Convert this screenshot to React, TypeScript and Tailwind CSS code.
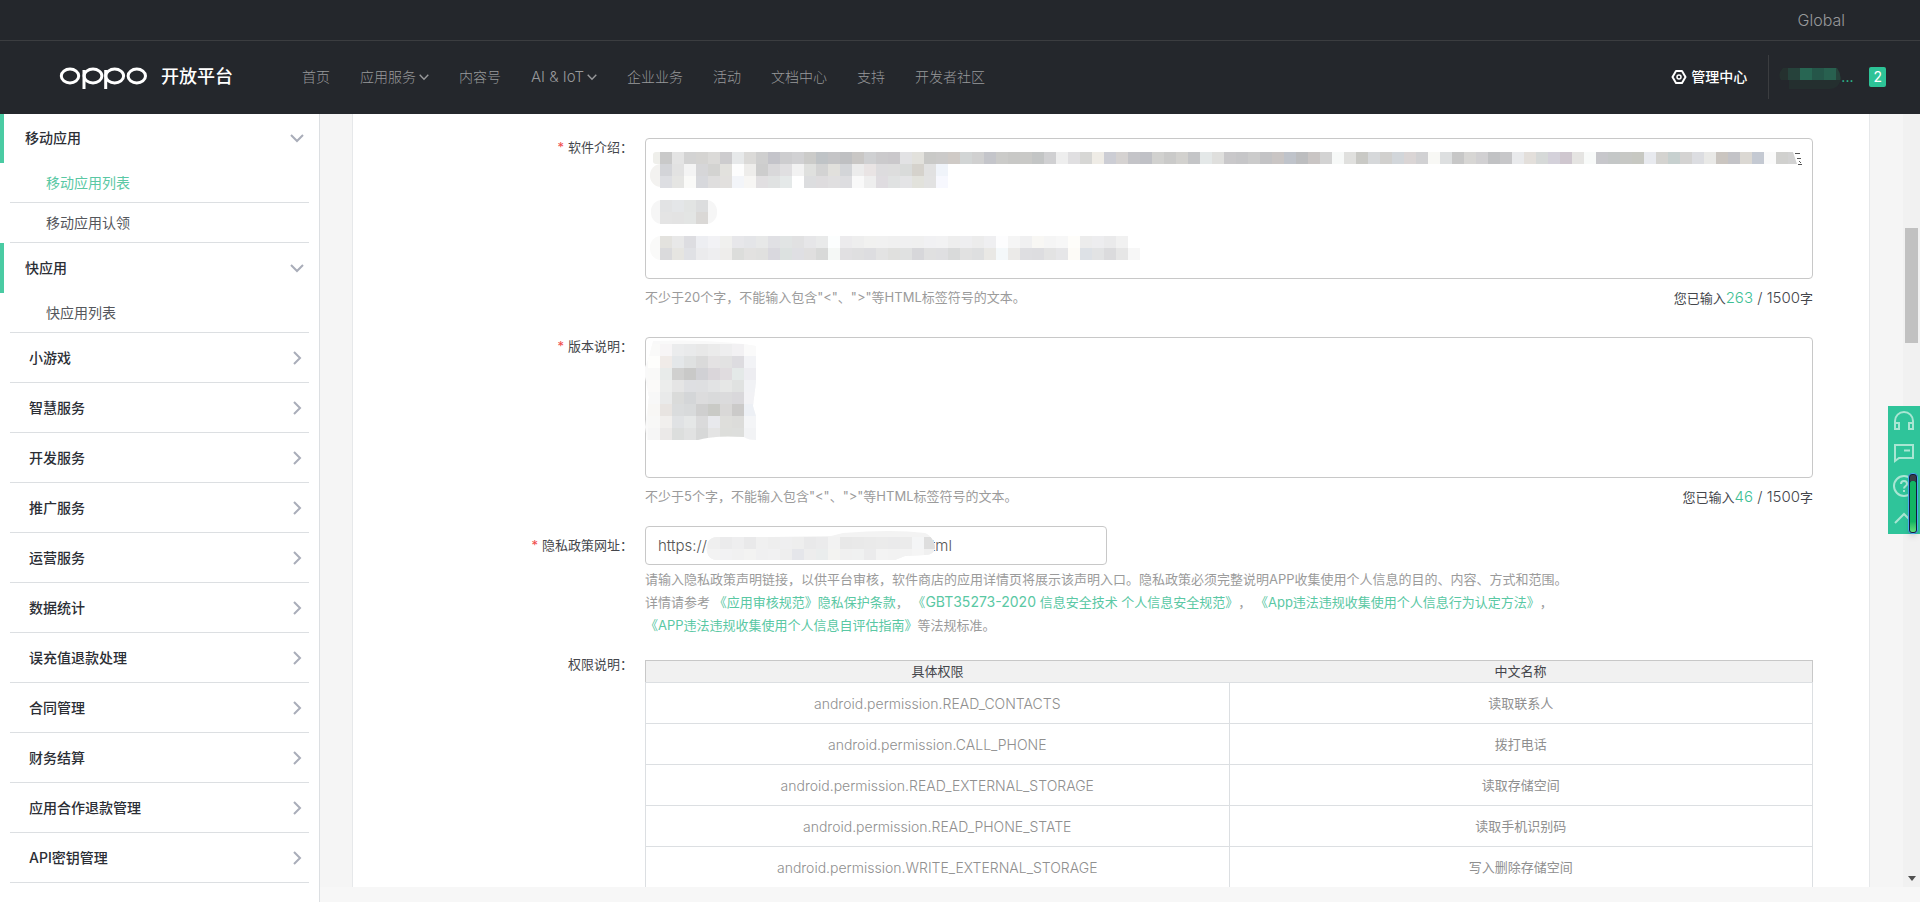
import { ReactNode } from "react";

const navItems = [
  { label: "首页" },
  { label: "应用服务", more: true },
  { label: "内容号" },
  { label: "AI & IoT", more: true },
  { label: "企业业务" },
  { label: "活动" },
  { label: "文档中心" },
  { label: "支持" },
  { label: "开发者社区" },
];

const closedGroups = [
  "小游戏",
  "智慧服务",
  "开发服务",
  "推广服务",
  "运营服务",
  "数据统计",
  "误充值退款处理",
  "合同管理",
  "财务结算",
  "应用合作退款管理",
  "API密钥管理",
];

const permissions = [
  ["android.permission.READ_CONTACTS", "读取联系人"],
  ["android.permission.CALL_PHONE", "拨打电话"],
  ["android.permission.READ_EXTERNAL_STORAGE", "读取存储空间"],
  ["android.permission.READ_PHONE_STATE", "读取手机识别码"],
  ["android.permission.WRITE_EXTERNAL_STORAGE", "写入删除存储空间"],
];

// mosaic colours, one string per row of 12px cells
const introTop = [
  "c9c9c9 e4e4e4 d3d3d3 d5d4d2 dbdad8 cdccce e7e9ea dbdad8 cfcfcf c4c4ca cdcdcf d1d1d3 cbcbc9 bfc3c6 c4c4c6 bfc0c2 c9c7c5 cfd0d2 cbcacc cac8cb e2e2e4 e2e1dc c9c9c7 cbcac9 cfcac6 d2d5d5 d0d0d0 c4c5ca cbcbc9 c8c8c6 c9c9c7 c3c5c5 d0d0d2 eeeeee e0dfe1 d7d7d5 efece6 cccdd4 d5d2d1 c4c4c8 c0c1c6 d1d1cf cacac9 d2d1ce c4c5c7 e4e8e8 dfdfdd c9c8ca c6c6c8 cbcbcb c3c3c5 c9c5c4 bfc3ca bcbdbf c9c5c4 d3d3d3 f7f9f8 e0e0de c9c9c5 d6d8da d1d0ce d2d6da dad5d5 d1d1d3 f8f8f5 dddfe0 c7c7c7 d7d6d4 d1d0d2 c1c2c4 c7c7c9 e9eaec e3dfdb d6d9d8 d4d1da cfc7cf e5e4e2 f8faf9 c7c7cb c4c7c7 c7c8c5 c7c8c2 e8eaef d4d3d0 c7d0cf d4d3d2 dcdde1 e9e9e7 cac5c0 c3c3c7 dbd8d3 c4c9d2 fafafa d0d0ce d2d2d2",
  "d3d4d8 e2e2e2 f4f4f4 d6d6d8 d3d3d1 e2e1dd fdfdfd eeedeb cdcdcd d9d8da e0dfe1 f2f2f2 dfe0de d3d3d3 e1e0dc d3d5d8 ececec e9e4e4 dddcde dddddd d9dbda d5d2cc e1e1e1 f0f4fa",
  "dddee2 e5e5e3 fafaf8 d7d8dc dfdede e2e0de f3f5f9 f7f6f4 e1dfe1 e0e2e2 e5e9e9 ffffff dcdddf dedcde e0dfe0 dddde0 f9f9f9 eeeeee dfdce0 e0e2e2 e4e4e6 e2e2dc e2e2e2 f7f8fe",
];

const introMiddle = ["e2e3e4 e4e6e8 e2e4e3 dcddde", "e4e4e4 e3e3e3 e3e5e4 dad8d6"];

const introBottom = [
  "e3e2de e8e8e8 dddde1 edeef2 f2f2f5 f0f0ee e7e7ea e4e5e8 e7e8e8 e0e0e4 e1e4e4 e1e1e2 e6e6e8 e9eaea fcfefe ecebed eeeeee f1f1f0 f1f1f1 f0f0f0 f0f0f1 f0f0f0 f1f1f3 f2f2f3 eeeeee eeeef0 ececec efeff1 fdfdfe f5f5f5 f0f0f1 f8f7f4 f5f5f5 f7f7f7 fefdfa ececec ededef eaeaeb f1f1f1",
  "dadadc e6e5e1 e0e1e5 ebebed eeeef0 eeedeb dcdddb e2e1e0 e0e0df d9d8de dce1e0 dfdfe3 e0dfdf d8d9d8 f5f8f6 e1e0e2 dfdfe0 dddde0 e3e3e3 e0e0de e0e1e1 d7d7da e0e0e0 dfdfe1 d9dada e1e1e1 dedfe0 e9e8e5 f4f8fa ebeae8 dedee1 dddde0 e3e3e3 e6e6e8 fdfbf7 dde1e6 e2e3e4 dbdbdd e6e6e6 f7f7f7",
];

const versionCells = [
  "fafaf9 f7f5f6 ebeced e9eaeb e8e8e8 ebebeb eeeeef f2f1f3 fafafa",
  "fefefc f0ebe8 e4e7e9 dfe1e1 dadada e4e2e3 e2e2e2 dddce0 f2f3f6",
  "f9f9f8 e8ebea d0d0cf c9c9c8 d1d1d5 dad6da e0dcdf e4e9e8 ededf1",
  "fbfaf9 ecedec e5e5e5 dedfe2 dedfe1 e2e3e4 e6e7e6 e0e2e1 f1f2f5",
  "f8f8f8 e9eaea dadbda d4d6d8 dcdcdd d9dadb dbdbdc d9d8db f2f2f5",
  "f8f7f5 e8e4e1 dadcdd d8dadb cfcfcf c9cac6 d9d8d7 cbcac9 edf0f5",
  "f8f8f7 f1efed e0e2e4 e5e7e7 dadadb e8e9ed dededb dcdcda f4f5f7",
  "f6f6f6 ebe9e8 dcdedd e1e2e2 d7d8d8 e4e4e4 dddedb dddedc f2f3f5",
];

const urlCells = [
  "efefef ebebec eeeeef e9e9ea f0f0f0 eeeeee efeff0 eeeeee e9e9ea ebebec f2f2f2 e8e8e8 e9e9e9 eaeaea ebebeb eaeaeb ebebeb f4f5f6 dedede",
  "f3f3f3 f2f2f3 f1f1f1 f3f3f2 f0f0f1 f1f1f2 eeeeee e5e6ea ededed eaeded f3f3f1 f0f0f0 f0f1f1 ebebec f3f3f3 f2f2f2 f3f3f3 f5f5f5 f0f0f0",
];

const userCells = ["26423b 286653 255649 28604f 26423b", "242f2f 242f2f 242f2f 242f2f 242f2f"];

// the middle of the address lies under the mosaic
const privacyUrl = `https://c${" ".repeat(49)}html`;

function Cells({ rows, x, y }: { rows: string[]; x: number; y: number }) {
  return (
    <g shapeRendering="crispEdges">
      {rows.map((row, r) =>
        row
          .split(" ")
          .map((c, i) => (
            <rect
              key={`${r}-${i}`}
              x={x + i * 12}
              y={y + r * 12}
              width="12"
              height="12"
              fill={`#${c}`}
            />
          ))
      )}
    </g>
  );
}

function Chevron({ className, d }: { className: string; d: string }) {
  return (
    <svg className={className} viewBox="0 0 14 14" fill="none" aria-hidden="true">
      <path d={d} stroke="currentColor" strokeWidth="2" />
    </svg>
  );
}

const DOWN = "M1 4l6 6 6-6";
const RIGHT = "M4 1l6 6-6 6";

function Logo() {
  return (
    <svg width="88" height="28" viewBox="0 0 88 28" fill="none" aria-label="OPPO">
      <g stroke="#fff" strokeWidth="3">
        <ellipse cx="11" cy="13" rx="8.7" ry="6.9" />
        <ellipse cx="34" cy="13" rx="8.9" ry="6.9" />
        <ellipse cx="55.7" cy="13" rx="8.9" ry="6.9" />
        <ellipse cx="77.8" cy="13" rx="8.7" ry="6.9" />
        <path d="M25 7v19M46.700 7v19" />
      </g>
    </svg>
  );
}

function Header() {
  return (
    <header className="shrink-0 bg-[#24272c] text-[#98999b]">
      <div className="flex h-[41px] items-center justify-end border-b border-[#3b3d40] pr-[75px]">
        <a href="#global" className="text-base font-light">
          Global
        </a>
      </div>
      <div className="flex h-[73px] items-center pb-px pl-[59px]">
        <a href="#home" className="flex items-center gap-3.5">
          <Logo />
          <span className="text-lg font-medium text-white">开放平台</span>
        </a>
        <nav className="ml-[69px] flex items-center gap-[30px] text-sm">
          {navItems.map((item) => (
            <a key={item.label} href="#nav" className="flex items-center gap-[3px] font-light">
              <span className={item.label === "AI & IoT" ? "text-[15px]" : ""}>{item.label}</span>
              {item.more && <Chevron className="size-2.5" d={DOWN} />}
            </a>
          ))}
        </nav>
        <div className="ml-auto flex items-center pr-[34px]">
          <a href="#console" className="flex items-center gap-1 text-sm font-medium text-white">
            <svg className="size-4" viewBox="0 0 16 16" fill="none" aria-hidden="true">
              <path
                d="M5 2h6l3.500 6-3.500 6H5L1.500 8z"
                stroke="currentColor"
                strokeWidth="2"
                strokeLinejoin="round"
              />
              <circle cx="8" cy="8" r="2" stroke="currentColor" strokeWidth="1.500" />
            </svg>
            管理中心
          </a>
          <div className="ml-[21px] flex h-11 items-center border-l border-[#3b3d40] pl-2.5">
            <a href="#account" className="flex items-center text-sm text-[#2dc397]">
              <svg width="62" height="24" viewBox="0 0 62 24" aria-hidden="true">
                <clipPath id="user">
                  <path d="M4 3h54q5 7 3 14-3 7-10 7H10V15H2Q-2 9 4 3z" />
                </clipPath>
                <g clipPath="url(#user)">
                  <rect width="62" height="15" fill="#25312f" />
                  <Cells rows={userCells} x={9} y={3} />
                </g>
              </svg>
              ...
            </a>
            <span className="ml-4 rounded-xs bg-[#2dc397] px-1 text-sm text-white">2</span>
          </div>
        </div>
      </div>
    </header>
  );
}

function OpenGroup({ title, items }: { title: string; items: string[] }) {
  return (
    <li>
      <button className="flex h-[50px] w-full items-center justify-between border-l-4 border-[#4acba3] pr-[15px] pl-[21px] font-medium text-[#2b2e35]">
        {title}
        <Chevron className="size-3.5 text-[#a9adb9]" d={DOWN} />
      </button>
      <ul>
        {items.map((item) => (
          <li key={item} className="mx-2.5 border-b border-[#dcdfe2]">
            <a
              href="#list"
              className={
                item === "移动应用列表"
                  ? "flex h-[39px] items-center pl-9 text-[#5ac8a4]"
                  : "flex h-[39px] items-center pl-9 text-[#55575c]"
              }
            >
              {item}
            </a>
          </li>
        ))}
      </ul>
    </li>
  );
}

function Sidebar() {
  return (
    <aside className="w-80 shrink-0 overflow-hidden border-r border-[#dcdfe2] bg-white text-sm">
      <ul className="-mt-px">
        <OpenGroup title="移动应用" items={["移动应用列表", "移动应用认领"]} />
        <OpenGroup title="快应用" items={["快应用列表"]} />
        {closedGroups.map((title) => (
          <li key={title} className="mx-2.5 border-b border-[#dcdfe2]">
            <button className="flex h-[49px] w-full items-center justify-between pr-[5px] pl-[19px] font-medium text-[#2b2e35]">
              {title}
              <Chevron className="size-3.5 text-[#a9adb9]" d={RIGHT} />
            </button>
          </li>
        ))}
      </ul>
    </aside>
  );
}

function Field({
  id,
  label,
  required,
  middle,
  children,
}: {
  id?: string;
  label: string;
  required?: boolean;
  middle?: boolean;
  children: ReactNode;
}) {
  return (
    <div className="flex gap-3">
      <label
        htmlFor={id}
        className={
          middle
            ? "w-[280px] shrink-0 pt-2.5 text-right leading-[18px] text-[#44464b]"
            : "w-[280px] shrink-0 text-right leading-[18px] text-[#44464b]"
        }
      >
        {required && <span className="mr-1 text-[#f04b4b]">*</span>}
        {label}：
      </label>
      <div className="min-w-0 flex-1">{children}</div>
    </div>
  );
}

function Hint({ min, count }: { min: number; count: number }) {
  return (
    <div className="mt-2 flex h-5 justify-between leading-5">
      <p className="text-[#9b9b9b]">
        不少于{min}个字，不能输入包含"&lt;"、"&gt;"等HTML标签符号的文本。
      </p>
      <p className="pt-px text-[#44464b]">
        您已输入<span className="text-[15px] font-light text-[#3fbf95]">{count}</span>
        <span className="text-[15px] font-light"> / 1500</span>字
      </p>
    </div>
  );
}

function Form() {
  return (
    <form className="pt-6 pr-14 text-[13px]">
      <div className="mb-[30px]">
        <Field id="intro" label="软件介绍" required>
          <div className="relative">
            <textarea
              id="intro"
              className="block h-[141px] w-full resize-none rounded border border-[#c8c8c8] px-3 py-2 outline-none"
            />
            <svg
              className="pointer-events-none absolute top-0 left-0"
              width="1168"
              height="140"
              viewBox="0 0 1168 140"
              aria-hidden="true"
            >
              <path d="M1150 15.500h5M1152 20.500h4M1153 26.500h4M1154 23l2 2" stroke="#555" />
              <rect x="8" y="14" width="20" height="12" rx="3" fill="#efefeb" />
              <rect x="5" y="26" width="30" height="23" rx="11" fill="#f3f2f0" />
              <rect x="6" y="62" width="66" height="24" rx="11" fill="#f6f6f6" />
              <rect x="5" y="98" width="30" height="24" rx="11" fill="#fafaf9" />
              <clipPath id="introClip">
                <path d="M0 0h1148v14l4 12v60H0z" />
              </clipPath>
              <g clipPath="url(#introClip)">
                <Cells rows={introTop} x={15} y={14} />
              </g>
              <Cells rows={introMiddle} x={15} y={62} />
              <Cells rows={introBottom} x={15} y={98} />
            </svg>
          </div>
          <Hint min={20} count={263} />
        </Field>
      </div>

      <div className="mb-5">
        <Field id="version" label="版本说明" required>
          <div className="relative">
            <textarea
              id="version"
              className="block h-[141px] w-full resize-none rounded border border-[#c8c8c8] px-3 py-2 outline-none"
            />
            <svg
              className="pointer-events-none absolute top-0 left-0"
              width="112"
              height="104"
              viewBox="0 0 112 104"
              aria-hidden="true"
            >
              <clipPath id="versionClip">
                <path d="M8 4q50-2 90 3l13 2v36l-3 24 3 10v24q-8 0-12-3-30-2-46 3H2L0 90 4 60 0 40V30l4-10z" />
              </clipPath>
              <g clipPath="url(#versionClip)">
                <rect width="112" height="104" fill="#f9f9f9" />
                <Cells rows={versionCells} x={3} y={7} />
              </g>
            </svg>
          </div>
          <Hint min={5} count={46} />
        </Field>
      </div>

      <Field id="privacy" label="隐私政策网址" required middle>
        <div className="relative max-w-[462px]">
          <input
            id="privacy"
            defaultValue={privacyUrl}
            className="block h-[39px] w-full rounded border border-[#c8c8c8] px-3 text-[15px] font-light whitespace-pre text-[#555] outline-none"
          />
          <svg
            className="pointer-events-none absolute top-0 left-0"
            width="300"
            height="39"
            viewBox="0 0 300 39"
            aria-hidden="true"
          >
            <clipPath id="urlClip">
              <path d="M72 11h54l60-1 12-3q50-4 82 0c6 2 10 10 10 14 0 5-4 8-10 8l-20 1-10 4H72c-14 0-14-23 0-23z" />
            </clipPath>
            <g clipPath="url(#urlClip)">
              <rect x="60" width="240" height="39" fill="#f3f3f3" />
              <Cells rows={urlCells} x={63} y={11} />
            </g>
          </svg>
        </div>
        <p className="mt-[3px] leading-[23px] text-[#9b9b9b] [text-spacing-trim:space-all]">
          请输入隐私政策声明链接，以供平台审核，软件商店的应用详情页将展示该声明入口。隐私政策必须完整说明APP收集使用个人信息的目的、内容、方式和范围。
          <br />
          详情请参考{" "}
          <a href="#rule" className="text-[#5ac8a4]">
            《应用审核规范》隐私保护条款
          </a>
          ，{" "}
          <a href="#gbt" className="text-[#5ac8a4]">
            《<span className="text-sm">GBT35273-2020</span> 信息安全技术 个人信息安全规范》
          </a>
          ，{" "}
          <a href="#method" className="text-[#5ac8a4]">
            《App违法违规收集使用个人信息行为认定方法》
          </a>
          ，
          <br />
          <a href="#guide" className="text-[#5ac8a4]">
            《APP违法违规收集使用个人信息自评估指南》
          </a>
          等法规标准。
        </p>
      </Field>

      <div className="mt-[18px]">
        <Field label="权限说明">
          <table className="mt-[5px] w-full table-fixed border-collapse text-center">
            <thead className="bg-[#f1f1f1] text-[#44464b]">
              <tr className="h-[22px] border border-[#c8c8c8] border-b-[#dcdfe2]">
                <th className="font-normal">具体权限</th>
                <th className="font-normal">中文名称</th>
              </tr>
            </thead>
            <tbody className="text-[#8f8f8f]">
              {permissions.map(([name, desc]) => (
                <tr key={name} className="h-[41px]">
                  <td className="border border-[#dcdfe2] pt-0.5 text-sm font-light">{name}</td>
                  <td className="border border-[#dcdfe2] pt-0.5">{desc}</td>
                </tr>
              ))}
            </tbody>
          </table>
        </Field>
      </div>
    </form>
  );
}

function ScrollTrack() {
  return (
    <div className="flex w-[17px] shrink-0 flex-col items-center justify-between bg-[#f1f1f1] pt-[114px] pb-1.5">
      <div className="h-[115px] w-[13px] bg-[#c1c1c1]" />
      <svg width="8" height="5" viewBox="0 0 8 5" aria-hidden="true">
        <path d="M0 0h8L4 5z" fill="#505050" />
      </svg>
    </div>
  );
}

function SideTools() {
  return (
    <div className="fixed top-[406px] right-0 flex h-32 w-8 flex-col items-center justify-between bg-[#2fc49a] py-1 text-[#a9e6d3]">
      <button aria-label="客服">
        <svg width="22" height="22" viewBox="0 0 22 22" fill="none" stroke="currentColor" strokeWidth="2">
          <path d="M2 19v-8a9 9 0 0 1 18 0v8M2 13h4v6H1M20 13h-4v6h5" />
        </svg>
      </button>
      <button aria-label="留言">
        <svg width="22" height="20" viewBox="0 0 22 20" fill="none" stroke="currentColor" strokeWidth="2">
          <path d="M2 2h18v13H6l-4 3zM11 7.500h6" />
        </svg>
      </button>
      <button aria-label="帮助">
        <svg width="24" height="24" viewBox="0 0 24 24" fill="none" stroke="currentColor" strokeWidth="2">
          <circle cx="12" cy="13" r="10" />
          <path d="M9 11c0-4 6-4 6 0 0 2-3 2-3 4.500M12 17v2" />
        </svg>
      </button>
      <button aria-label="返回顶部">
        <svg width="22" height="22" viewBox="0 0 22 22" fill="none" stroke="currentColor" strokeWidth="2">
          <path d="M2 15l9-9 9 9" />
        </svg>
      </button>
      <div className="absolute right-0.5 bottom-0 h-[61px] w-2.5 rounded-sm border border-[#4aa8f0] bg-[#111a3a] p-px shadow-md">
        <div className="h-1.5 rounded-t-xs bg-[#3a3f46]" />
        <div className="h-[51px] rounded-xs bg-linear-to-b from-[#12b562] from-80% to-[#5fe07a]" />
      </div>
    </div>
  );
}

export default function App() {
  return (
    <div className="flex h-screen flex-col overflow-hidden font-['Inter','Noto_Sans_CJK_SC',sans-serif]">
      <Header />
      <div className="flex min-h-0 flex-1">
        <Sidebar />
        <div className="flex min-w-0 flex-1 flex-col bg-[#f7f7f7] pb-[15px]">
          <div className="flex min-h-0 flex-1 bg-[#f5f5f5]">
            <main className="mr-[33px] ml-8 min-w-0 flex-1 overflow-hidden border-x border-[#e6e8ea] bg-white">
              <Form />
            </main>
            <ScrollTrack />
          </div>
        </div>
      </div>
      <SideTools />
    </div>
  );
}
